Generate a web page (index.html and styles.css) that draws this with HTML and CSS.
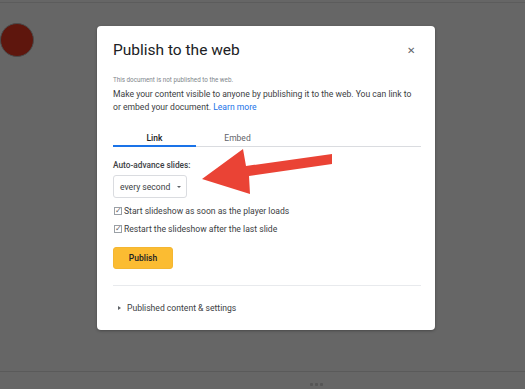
FILE: index.html
```html
<!DOCTYPE html>
<html lang="en">

<head>
    <meta charset="UTF-8">
    <title>Publish to the web</title>
    <link rel="stylesheet" href="styles.css">
</head>

<body>
    <div class="topline"></div>
    <div class="record-dot"></div>

    <div class="dialog">
        <div class="dialog-head">
            <h1>Publish to the web</h1>
            <span class="close">&#x2715;</span>
        </div>
        <p class="status">This document is not published to the web.</p>
        <p class="intro">Make your content visible to anyone by publishing it to the web. You can link to or embed your document. <a href="#">Learn more</a></p>

        <div class="tabs">
            <div class="tab active">Link</div>
            <div class="tab">Embed</div>
        </div>

        <div class="field-label">Auto-advance slides:</div>
        <div class="select">every second <span class="caret"></span></div>

        <label class="check"><span class="box">&#x2713;</span>Start slideshow as soon as the player loads</label>
        <label class="check"><span class="box">&#x2713;</span>Restart the slideshow after the last slide</label>

        <button class="btn">Publish</button>

        <div class="settings"><span class="tri"></span>Published content &amp; settings</div>
    </div>

    <svg class="arrow" width="140" height="50" viewBox="0 0 140 50">
        <!-- red annotation arrow -->
        <polygon points="0,30 41,0 44,17 130,5 130,15 47,27 48,45" fill="#ea4335"/>
    </svg>

    <div class="bottombar"><span></span><span></span><span></span></div>
</body>

</html>
```

FILE: styles.css
```css
* {
    margin: 0;
    padding: 0;
    box-sizing: border-box;
}

body {
    width: 525px;
    height: 389px;
    background-color: #666666;
    font-family: Roboto, 'Liberation Sans', sans-serif;
    color: #3c4043;
    position: relative;
    overflow: hidden;
}

.topline {
    height: 3px;
    border-bottom: 1px solid #5c5c5c;
}

.record-dot {
    position: absolute;
    left: 0;
    top: 23px;
    width: 34px;
    height: 34px;
    border-radius: 50%;
    background-color: #5e160d;
    border: 1px solid #4a4a4a;
}

.dialog {
    width: 338px;
    margin: 23px 0 0 97px;
    padding: 13px 14px 17px 16px;
    background-color: #ffffff;
    border-radius: 4px;
    box-shadow: 0 1px 3px rgba(0, 0, 0, 0.3);
}

.dialog-head {
    display: flex;
    justify-content: space-between;
    align-items: center;
}

h1 {
    font-family: Roboto, sans-serif;
    font-weight: 400;
    font-size: 15.5px;
    line-height: 22px;
    color: #202124;
}

.close {
    font-size: 10px;
    color: #5f6368;
    margin-right: 6px;
}

.status {
    font-size: 6.3px;
    color: #80868b;
    margin-top: 15px;
}

.intro {
    font-size: 8.6px;
    line-height: 13px;
    color: #3c4043;
    margin-top: 4px;
}

.intro a {
    color: #1a73e8;
    text-decoration: none;
}

.tabs {
    display: flex;
    margin-top: 19px;
    border-bottom: 1px solid #dadce0;
}

.tab {
    width: 83px;
    text-align: center;
    font-size: 8.5px;
    color: #5f6368;
    padding-bottom: 2px;
    margin-bottom: -1px;
    border-bottom: 2px solid transparent;
}

.tab.active {
    color: #202124;
    font-weight: 500;
    border-bottom-color: #1a73e8;
}

.field-label {
    font-size: 8.3px;
    font-weight: 500;
    color: #3c4043;
    margin-top: 13px;
}

.select {
    display: inline-flex;
    align-items: center;
    gap: 7px;
    height: 23px;
    padding: 0 5px 0 6px;
    margin-top: 5px;
    border: 1px solid #dadce0;
    border-radius: 3px;
    font-size: 8.6px;
    color: #3c4043;
}

.caret {
    border-left: 2.5px solid transparent;
    border-right: 2.5px solid transparent;
    border-top: 2.5px solid #5f6368;
}

.check {
    display: flex;
    align-items: center;
    font-size: 8.6px;
    color: #3c4043;
    margin-top: 8px;
}

.check + .check {
    margin-top: 8px;
}

.box {
    width: 8px;
    height: 8px;
    border: 1px solid #9aa0a6;
    margin: 0 2px 0 1px;
    font-size: 8px;
    line-height: 6px;
    color: #5f6368;
    text-align: center;
}

.btn {
    display: block;
    margin-top: 13px;
    width: 60px;
    height: 22px;
    background-color: #fbbc32;
    border: 1px solid #f4b631;
    border-radius: 3px;
    font-family: Roboto, sans-serif;
    font-size: 8.5px;
    font-weight: 500;
    color: #202124;
}

.settings {
    display: flex;
    align-items: center;
    margin-top: 16px;
    padding-top: 17px;
    border-top: 1px solid #e8eaed;
    font-size: 8.6px;
    color: #3c4043;
}

.tri {
    border-top: 2px solid transparent;
    border-bottom: 2px solid transparent;
    border-left: 3px solid #5f6368;
    margin: 0 6px 0 5px;
}

.arrow {
    position: absolute;
    left: 202px;
    top: 149px;
}

.bottombar {
    position: absolute;
    left: 0;
    top: 371px;
    width: 525px;
    height: 18px;
    border-top: 1px solid #5a5a5a;
    display: flex;
    align-items: flex-end;
    gap: 2px;
    padding: 0 0 3px 310px;
}

.bottombar span {
    width: 3px;
    height: 3px;
    background-color: #555555;
    border-radius: 1px;
}
```
